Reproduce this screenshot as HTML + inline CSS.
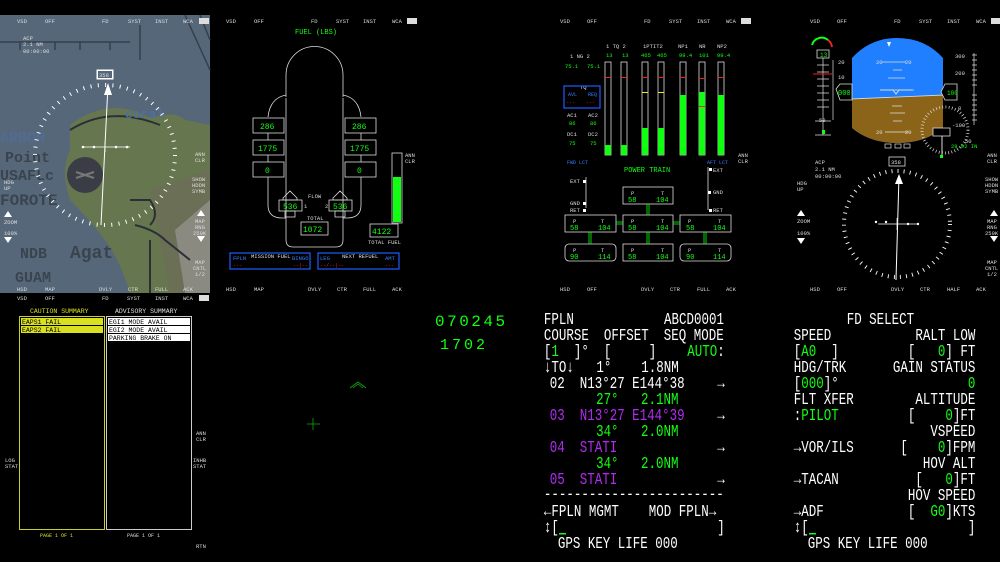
<!DOCTYPE html>
<html><head><meta charset="utf-8"><style>
html,body{margin:0;padding:0;background:#000;width:1000px;height:562px;overflow:hidden}
svg{display:block}
text{font-family:"Liberation Mono","DejaVu Sans Mono",monospace;white-space:pre}
.s{font-size:5.5px;fill:#ddd}
.g{fill:#1f1}
.w{fill:#fff}
.m{fill:#b02cf0}
.b{font-size:17px}
</style></head><body>
<svg width="1000" height="562" viewBox="0 0 1000 562" xmlns="http://www.w3.org/2000/svg" xml:space="preserve">
<rect width="1000" height="562" fill="#000"/>

<!-- ===== MAP PANEL ===== -->
<rect x="0" y="15" width="210" height="278" fill="#56677a"/>
<path d="M70 125 Q110 95 150 118 Q175 110 185 120 L210 125 L210 293 L130 293 Q120 260 105 240 Q90 220 70 200 Q60 170 70 150 Z" fill="#66774f"/>
<path d="M150 190 L210 170 L210 293 L170 293 Z" fill="#6a6f55"/>
<path d="M175 230 L210 200 L210 293 L185 293 Z" fill="#8a8a80"/>
<path d="M0 42 L130 42 M20 42 L20 50 M55 42 L55 50 M80 42 L80 50 M110 42 L110 50 M140 25 L140 60 M200 15 L210 40 M185 15 L210 70" stroke="#34404c" stroke-width="1.5" fill="none"/>
<path d="M70 130 Q110 105 160 125 M130 200 L150 200 Q160 215 150 225 M135 225 Q155 230 165 240 L190 260 M150 240 L150 293" stroke="#2b3038" stroke-width="2" fill="none"/>
<text x="0" y="142" font-family="Liberation Sans" font-weight="bold" font-size="15" fill="#4f6f9c" opacity=".7">ARBOR</text>
<text x="5" y="162" font-family="Liberation Sans" font-weight="bold" font-size="15" fill="#3a444e">Point</text>
<text x="0" y="180" font-family="Liberation Sans" font-weight="bold" font-size="15" fill="#3a444e">USAFLc</text>
<text x="0" y="205" font-family="Liberation Sans" font-weight="bold" font-size="16" fill="#3a444e">FOROTE</text>
<text x="20" y="258" font-family="Liberation Sans" font-weight="bold" font-size="15" fill="#3a444e">NDB</text>
<text x="70" y="258" font-family="Liberation Sans" font-weight="bold" font-size="18" fill="#3a444e">Agat</text>
<text x="15" y="282" font-family="Liberation Sans" font-weight="bold" font-size="15" fill="#3a444e">GUAM</text>
<text x="125" y="118" font-family="Liberation Sans" font-weight="bold" font-size="13" fill="#4f6f9c">coral</text>
<circle cx="85" cy="175" r="18" fill="#3a3d45"/>
<path d="M76 172 L94 178 M76 178 L94 172" stroke="#777" stroke-width="2"/>
<circle cx="105" cy="155" r="70" fill="none" stroke="#fff" stroke-width="4" stroke-dasharray="1 6.33"/>
<line x1="108" y1="85" x2="101" y2="225" stroke="#fff" stroke-width="1"/>
<path d="M108 83 L104 95 L112 95Z" fill="#fff"/>
<rect x="97" y="70" width="16" height="9" fill="#fff" stroke="#fff"/><rect x="98" y="71" width="14" height="7" fill="#56677a"/>
<text x="99" y="77" class="s" fill="#fff">358</text>
<path d="M83 147 L130 147 M105 142 L105 152" stroke="#fff" stroke-width="0.8"/>
<g fill="#fff"><circle cx="83" cy="147" r="1.3"/><circle cx="94" cy="147" r="1.3"/><circle cx="116" cy="147" r="1.3"/><circle cx="127" cy="147" r="1.3"/></g>
<g class="s"><text x="23" y="40">ACP</text><text x="23" y="46">2.1 NM</text><text x="23" y="53">00:00:00</text></g>
<g class="s">
<text x="4" y="184">HDG</text><text x="4" y="190">UP</text>
<text x="4" y="224">ZOOM</text><text x="4" y="235">100%</text>
<text x="195" y="156">ANN</text><text x="195" y="162">CLR</text>
<text x="192" y="181">SHOW</text><text x="192" y="187">HDDN</text><text x="192" y="193">SYMB</text>
<text x="195" y="223">MAP</text><text x="195" y="229">RNG</text><text x="193" y="235">250K</text>
<text x="195" y="264">MAP</text><text x="193" y="270">CNTL</text><text x="195" y="276">1/2</text>
</g>
<path d="M4 217 L8 211 L12 217Z M4 237 L8 243 L12 237Z M197 216 L201 210 L205 216Z M197 236 L201 242 L205 236Z" fill="#fff"/>
<g class="s" fill="#fff">
<text x="17" y="23">VSD</text><text x="45" y="23">OFF</text><text x="102" y="23">FD</text><text x="128" y="23">SYST</text><text x="155" y="23">INST</text><text x="183" y="23">WCA</text>
<text x="17" y="291">HSD</text><text x="45" y="291">MAP</text><text x="99" y="291">DVLY</text><text x="128" y="291">CTR</text><text x="155" y="291">FULL</text><text x="183" y="291">ACK</text>
</g>
<rect x="199" y="18" width="10" height="6" fill="#ddd"/>

<g class="s">
<text x="226" y="23">VSD</text><text x="254" y="23">OFF</text><text x="311" y="23">FD</text><text x="336" y="23">SYST</text><text x="363" y="23">INST</text><text x="392" y="23">WCA</text>
<text x="226" y="291">HSD</text><text x="254" y="291">MAP</text><text x="308" y="291">DVLY</text><text x="337" y="291">CTR</text><text x="363" y="291">FULL</text><text x="392" y="291">ACK</text>
<text x="560" y="23">VSD</text><text x="587" y="23">OFF</text><text x="644" y="23">FD</text><text x="669" y="23">SYST</text><text x="697" y="23">INST</text><text x="726" y="23">WCA</text>
<text x="560" y="291">HSD</text><text x="587" y="291">OFF</text><text x="641" y="291">DVLY</text><text x="670" y="291">CTR</text><text x="697" y="291">FULL</text><text x="726" y="291">ACK</text>
<text x="810" y="23">VSD</text><text x="837" y="23">OFF</text><text x="894" y="23">FD</text><text x="919" y="23">SYST</text><text x="947" y="23">INST</text><text x="976" y="23">WCA</text>
<text x="810" y="291">HSD</text><text x="837" y="291">OFF</text><text x="891" y="291">DVLY</text><text x="920" y="291">CTR</text><text x="947" y="291">HALF</text><text x="976" y="291">ACK</text>
<text x="17" y="300">VSD</text><text x="45" y="300">OFF</text><text x="102" y="300">FD</text><text x="127" y="300">SYST</text><text x="155" y="300">INST</text><text x="183" y="300">WCA</text>
</g>
<rect x="407" y="18" width="10" height="6" fill="#ddd"/><rect x="741" y="18" width="10" height="6" fill="#ddd"/><rect x="991" y="18" width="9" height="6" fill="#ddd"/><rect x="199" y="295" width="10" height="6" fill="#ddd"/>

<!-- ===== FUEL ===== -->
<text x="295" y="34" font-size="7" class="g">FUEL (LBS)</text>
<g fill="none" stroke="#ddd" stroke-width="0.8">
<path d="M286 97 L286 75 A28 28 0 0 1 343 75 L343 97"/>
<path d="M286 98 L286 240 Q286 247 293 247 L336 247 Q343 247 343 240 L343 98"/>
<path d="M286 95 Q270 98 268 117 M343 95 Q359 98 361 117"/>
<rect x="253" y="118" width="31" height="15"/><rect x="253" y="140" width="31" height="15"/><rect x="253" y="162" width="31" height="15"/>
<rect x="345" y="118" width="31" height="15"/><rect x="345" y="140" width="31" height="15"/><rect x="345" y="162" width="31" height="15"/>
<path d="M268 133 L268 140 M268 155 L268 162 M268 177 L268 205 Q268 218 282 218 L286 218 M361 133 L361 140 M361 155 L361 162 M361 177 L361 205 Q361 218 347 218 L343 218"/>
<path d="M283 198 L290 191 L297 198 L297 200 L283 200Z M333 198 L340 191 L347 198 L347 200 L333 200Z"/>
<rect x="279" y="200" width="23" height="11"/><rect x="329" y="200" width="23" height="11"/>
<rect x="285" y="211" width="10" height="6"/><rect x="335" y="211" width="10" height="6"/>
<rect x="301" y="222" width="27" height="13"/>
<rect x="392" y="153" width="10" height="70"/>
<rect x="370" y="224" width="28" height="13"/>
</g>
<rect x="393" y="177" width="8" height="45" fill="#1f1"/>
<g font-size="8" class="g">
<text x="260" y="129">286</text><text x="352" y="129">286</text>
<text x="258" y="151">1775</text><text x="350" y="151">1775</text>
<text x="265" y="173">0</text><text x="357" y="173">0</text>
<text x="283" y="209">536</text><text x="333" y="209">536</text>
<text x="303" y="232">1072</text><text x="372" y="234">4122</text>
</g>
<g class="s"><text x="308" y="198">FLOW</text><text x="304" y="208">1</text><text x="325" y="208">2</text><text x="307" y="220">TOTAL</text><text x="368" y="244">TOTAL FUEL</text><text x="405" y="157">ANN</text><text x="405" y="163">CLR</text></g>
<rect x="230" y="253" width="80" height="16" fill="none" stroke="#1a5cff" stroke-width="1.2"/>
<rect x="318" y="253" width="81" height="16" fill="none" stroke="#1a5cff" stroke-width="1.2"/>
<g class="s"><text x="251" y="258">MISSION FUEL</text><text x="342" y="258">NEXT REFUEL</text></g>
<g font-size="5.5px" fill="#3a7cff"><text x="233" y="260">FPLN</text><text x="292" y="260">BINGO</text><text x="320" y="260">LEG</text><text x="385" y="260">AMT</text></g>
<g font-size="5px" fill="#e22"><text x="233" y="267">---</text><text x="293" y="267">--|--</text><text x="320" y="267">--/--|--</text><text x="385" y="267">---</text></g>

<!-- ===== POWER TRAIN ===== -->
<g class="s"><text x="606" y="48">1 TQ 2</text><text x="643" y="48">1PTIT2</text><text x="678" y="48">NP1</text><text x="699" y="48">NR</text><text x="717" y="48">NP2</text>
<text x="570" y="58">1 NG 2</text><text x="580" y="89">TQ</text><text x="567" y="117">AC1</text><text x="588" y="117">AC2</text><text x="567" y="136">DC1</text><text x="588" y="136">DC2</text>
<text x="738" y="157">ANN</text><text x="738" y="163">CLR</text>
<text x="570" y="183">EXT</text><text x="570" y="205">GND</text><text x="570" y="212">RET</text>
<text x="713" y="172">EXT</text><text x="713" y="194">GND</text><text x="713" y="212">RET</text></g>
<g font-size="5.5px" class="g"><text x="606" y="57">13</text><text x="622" y="57">13</text><text x="641" y="57">465</text><text x="657" y="57">465</text><text x="679" y="57">99.4</text><text x="699" y="57">101</text><text x="717" y="57">99.4</text>
<text x="565" y="68">75.1</text><text x="587" y="68">75.1</text><text x="569" y="125">86</text><text x="590" y="125">86</text><text x="569" y="145">75</text><text x="590" y="145">75</text></g>
<rect x="564" y="86" width="36" height="22" fill="none" stroke="#1a5cff" stroke-width="1.2"/>
<g font-size="5px" fill="#3a7cff"><text x="568" y="96">AVL</text><text x="588" y="96">REQ</text><text x="567" y="164">FWD LCT</text><text x="707" y="164">AFT LCT</text></g>
<g font-size="5px" fill="#e22"><text x="566" y="104">---</text><text x="586" y="104">---</text></g>
<g fill="none" stroke="#ddd" stroke-width="0.8">
<rect x="605" y="62" width="6" height="93"/><rect x="621" y="62" width="6" height="93"/><rect x="642" y="62" width="6" height="93"/><rect x="658" y="62" width="6" height="93"/><rect x="680" y="62" width="6" height="93"/><rect x="699" y="62" width="6" height="93"/><rect x="718" y="62" width="6" height="93"/>
</g>
<g fill="#1f1"><rect x="605" y="145" width="6" height="10"/><rect x="621" y="145" width="6" height="10"/><rect x="642" y="128" width="6" height="27"/><rect x="658" y="128" width="6" height="27"/><rect x="680" y="95" width="6" height="60"/><rect x="699" y="92" width="6" height="63"/><rect x="718" y="95" width="6" height="60"/></g>
<g fill="#e22"><rect x="605" y="77" width="6" height="1"/><rect x="621" y="77" width="6" height="1"/><rect x="642" y="77" width="6" height="1"/><rect x="658" y="77" width="6" height="1"/><rect x="680" y="77" width="6" height="1"/><rect x="718" y="77" width="6" height="1"/><rect x="699" y="78" width="6" height="1"/><rect x="699" y="106" width="6" height="1"/></g>
<g fill="#ee2"><rect x="642" y="92" width="6" height="1"/><rect x="658" y="92" width="6" height="1"/></g>
<text x="624" y="172" font-size="7" class="g">POWER TRAIN</text>
<g fill="none" stroke="#ddd" stroke-width="0.8">
<path d="M586 177 L586 208 M708 167 L708 210"/>
<rect x="623" y="187" width="50" height="17"/>
<rect x="565" y="215" width="51" height="17"/><rect x="623" y="215" width="50" height="17"/><rect x="680" y="215" width="51" height="17"/>
<rect x="565" y="244" width="51" height="17" rx="4"/><rect x="623" y="244" width="50" height="17"/><rect x="680" y="244" width="51" height="17" rx="4"/>
</g>
<g stroke="#1f1" stroke-width="0.8"><path d="M647 204 V215 M649 204 V215 M589 232 V244 M591 232 V244 M647 232 V244 M649 232 V244 M704 232 V244 M706 232 V244 M616 222 H623 M616 224 H623 M673 222 H680 M673 224 H680"/></g>
<g fill="#fff"><rect x="583" y="180" width="3" height="3"/><rect x="583" y="202" width="3" height="3"/><rect x="583" y="209" width="3" height="3"/><rect x="709" y="168" width="3" height="3"/><rect x="708" y="191" width="3" height="3"/><rect x="709" y="209" width="3" height="3"/></g>
<g class="s"><text x="573" y="223">P</text><text x="601" y="223">T</text><text x="631" y="195">P</text><text x="661" y="195">T</text><text x="631" y="223">P</text><text x="661" y="223">T</text><text x="688" y="223">P</text><text x="718" y="223">T</text><text x="573" y="252">P</text><text x="601" y="252">T</text><text x="631" y="252">P</text><text x="661" y="252">T</text><text x="688" y="252">P</text><text x="718" y="252">T</text></g>
<g font-size="7" class="g"><text x="628" y="202">58</text><text x="656" y="202">104</text>
<text x="570" y="230">58</text><text x="598" y="230">104</text><text x="628" y="230">58</text><text x="656" y="230">104</text><text x="686" y="230">58</text><text x="713" y="230">104</text>
<text x="570" y="259">90</text><text x="598" y="259">114</text><text x="628" y="259">58</text><text x="656" y="259">104</text><text x="686" y="259">90</text><text x="713" y="259">114</text></g>

<!-- ===== PFD ===== -->
<defs><clipPath id="att"><path d="M852 58 Q870 38 897 38 Q925 38 943 58 L943 128 Q925 143 897 143 Q870 143 852 128 Z"/></clipPath></defs>
<g clip-path="url(#att)">
<rect x="850" y="35" width="95" height="110" fill="#1f7fff"/>
<path d="M850 99 L945 95 L945 145 L850 145Z" fill="#8b6419"/>
<path d="M850 99 L945 95" stroke="#ddd" stroke-width="0.8"/>
<g stroke="#ddd" stroke-width="0.8"><path d="M882 62 H906 M893 70 H902 M888 78 H905 M881 90 H914 M892 106 H902 M890 113 H905 M893 121 H902 M885 132 H909"/></g>
<g class="s" fill="#ddd"><text x="876" y="64">20</text><text x="905" y="64">20</text><text x="876" y="134">20</text><text x="905" y="134">20</text></g>
</g>
<path d="M887 42 L891 42 L889 47Z" fill="#fff"/>
<path d="M880 90 L893 90 L896 94 L899 90 L912 90" stroke="#ddd" fill="none"/>
<path d="M812 45 A10 10 0 0 1 828 40" stroke="#1f1" stroke-width="2" fill="none"/><path d="M828 40 A10 10 0 0 1 832 47" stroke="#e22" stroke-width="2" fill="none"/>
<rect x="817" y="50" width="12" height="8" fill="none" stroke="#ddd" stroke-width="0.8"/><text x="820" y="57" font-size="6" class="g">13</text>
<g stroke="#ddd" stroke-width="0.7"><path d="M823 58 V135 M817 65 H829 M817 72 H829 M817 79 H829 M817 86 H829 M817 93 H829 M817 100 H829 M817 107 H829 M815 121 H831 M815 135 H831"/><path d="M833 60 V120"/></g>
<path d="M813 74 H832" stroke="#e22" stroke-width="1"/>
<rect x="822" y="130" width="3" height="4" fill="#1f1"/>
<path d="M836 89 L840 84 H852 V100 H840Z" fill="#000" stroke="#ddd" stroke-width="0.8"/><text x="838" y="95" font-size="7" class="g">000</text>
<path d="M945 84 H957 V100 H945 L941 92Z" fill="#000" stroke="#ddd" stroke-width="0.8"/><text x="947" y="95" font-size="6" class="g">100</text>
<g class="s"><text x="838" y="64">20</text><text x="838" y="79">10</text><text x="819" y="122">50</text><text x="955" y="58">300</text><text x="955" y="75">200</text><text x="958" y="110">0</text><text x="952" y="127">-100</text><text x="965" y="143">50</text></g>
<g stroke="#ddd" stroke-width="0.7"><path d="M974 53 V125 M972 55 H977 M972 60 H977 M972 65 H977 M972 70 H977 M972 75 H977 M972 80 H977 M972 85 H977 M972 95 H977 M972 100 H977 M972 105 H977 M972 110 H977 M972 115 H977 M972 120 H977"/></g>
<circle cx="945" cy="130" r="23" fill="none" stroke="#ddd" stroke-width="3" stroke-dasharray="0.7 2.5"/>
<rect x="933" y="128" width="17" height="8" fill="#000" stroke="#ddd" stroke-width="0.8"/>
<path d="M942 136 V157" stroke="#ddd"/><rect x="940" y="155" width="3" height="3" fill="#1f1"/>
<text x="951" y="148" font-size="5.5" class="g">29.92 IN</text>
<g fill="none" stroke="#ddd" stroke-width="0.7"><rect x="885" y="144" width="6" height="4"/><rect x="895" y="144" width="6" height="4"/><rect x="904" y="144" width="6" height="4"/></g>
<rect x="889" y="157" width="16" height="9" fill="none" stroke="#ddd" stroke-width="0.8"/><text x="891" y="164" class="s">358</text>
<circle cx="897" cy="224" r="53" fill="none" stroke="#fff" stroke-width="4" stroke-dasharray="0.9 5.2"/>
<path d="M899 176 L896 280" stroke="#fff"/><path d="M899 174 L895 184 L903 184Z" fill="#fff"/>
<path d="M878 224 H918 M897 218 V230" stroke="#fff" stroke-width="0.7"/>
<g fill="#fff"><circle cx="876" cy="222" r="1.2"/><circle cx="886" cy="222" r="1.2"/><circle cx="908" cy="224" r="1.2"/><circle cx="918" cy="224" r="1.2"/></g>
<g class="s"><text x="815" y="164">ACP</text><text x="815" y="171">2.1 NM</text><text x="815" y="178">00:00:00</text>
<text x="797" y="185">HDG</text><text x="797" y="191">UP</text><text x="797" y="223">ZOOM</text><text x="797" y="235">100%</text>
<text x="987" y="157">ANN</text><text x="987" y="163">CLR</text><text x="985" y="181">SHOW</text><text x="985" y="187">HDDN</text><text x="985" y="193">SYMB</text>
<text x="987" y="223">MAP</text><text x="987" y="229">RNG</text><text x="985" y="235">250K</text><text x="987" y="264">MAP</text><text x="985" y="270">CNTL</text><text x="987" y="276">1/2</text></g>
<path d="M797 216 L801 210 L805 216Z M797 238 L801 244 L805 238Z M990 216 L994 210 L998 216Z M990 236 L994 242 L998 236Z" fill="#fff"/>

<!-- ===== CAUTION / ADVISORY ===== -->
<text x="30" y="313" font-size="6.5" fill="#d8e020">CAUTION SUMMARY</text>
<text x="115" y="313" font-size="6.5" fill="#ddd">ADVISORY SUMMARY</text>
<rect x="19.5" y="316.5" width="85" height="213" fill="none" stroke="#c8d020"/>
<rect x="106.5" y="316.5" width="85" height="213" fill="none" stroke="#ccc"/>
<rect x="21" y="318" width="82" height="7" fill="#d8e020"/><rect x="21" y="326" width="82" height="7" fill="#d8e020"/>
<rect x="108" y="318" width="82" height="7" fill="#fff"/><rect x="108" y="326" width="82" height="7" fill="#fff"/><rect x="108" y="334" width="82" height="7" fill="#fff"/>
<g font-size="6.5" fill="#000"><text x="22" y="324">EAPS1 FAIL</text><text x="22" y="332">EAPS2 FAIL</text><text x="109" y="324">EGI1 MODE AVAIL</text><text x="109" y="332">EGI2 MODE AVAIL</text><text x="109" y="340">PARKING BRAKE ON</text></g>
<text x="40" y="537" font-size="5" fill="#d8e020">PAGE 1 OF 1</text><text x="127" y="537" font-size="5" fill="#ddd">PAGE 1 OF 1</text>
<g class="s"><text x="5" y="462">LOG</text><text x="5" y="468">STAT</text><text x="196" y="435">ANN</text><text x="196" y="441">CLR</text><text x="193" y="462">INHB</text><text x="193" y="468">STAT</text><text x="196" y="548">RTN</text></g>

<!-- ===== HUD ===== -->
<text x="435" y="326" font-size="16" class="g" letter-spacing="2.5">070245</text>
<text x="440" y="349" font-size="15" class="g" letter-spacing="3">1702</text>
<path d="M350 388 L358 382 L366 388 M353 388 L358 384 L363 388" stroke="#1a1" fill="none" stroke-width="0.8"/>
<path d="M313 418 V430 M307 424 H320" stroke="#1a1" stroke-width="0.8"/>

<!-- ===== FPLN / FD SELECT (horizontally condensed) ===== -->
<g transform="scale(0.735,1)" class="b w">
<text x="740" y="324">FPLN</text><text x="985" y="324" text-anchor="end">ABCD0001</text>
<text x="740" y="340">COURSE  OFFSET  SEQ MODE</text>
<text x="740" y="356">[<tspan class="g">1</tspan>  ]°  [     ]</text><text x="986" y="356" text-anchor="end"><tspan class="g">AUTO</tspan>:</text>
<text x="740" y="372">↓TO↓   1°    1.8NM</text>
<text x="748" y="388">02  N13°27 E144°38</text><text x="986" y="388" text-anchor="end">→</text>
<text x="811" y="404" class="g">27°   2.1NM</text>
<text x="748" y="420" class="m">03  N13°27 E144°39</text><text x="986" y="420" text-anchor="end">→</text>
<text x="811" y="436" class="g">34°   2.0NM</text>
<text x="748" y="452" class="m">04  STATI</text><text x="986" y="452" text-anchor="end">→</text>
<text x="811" y="468" class="g">34°   2.0NM</text>
<text x="748" y="484" class="m">05  STATI</text><text x="986" y="484" text-anchor="end">→</text>
<text x="740" y="499">------------------------</text>
<text x="740" y="516">←FPLN MGMT    MOD FPLN→</text>
<text x="740" y="532">↕[</text><text x="986" y="532" text-anchor="end">]</text>
<text x="759" y="548">GPS KEY LIFE 000</text>

<text x="1152" y="324">FD SELECT</text>
<text x="1080" y="340">SPEED</text><text x="1327" y="340" text-anchor="end">RALT LOW</text>
<text x="1080" y="356">[<tspan class="g">A0</tspan>  ]</text><text x="1327" y="356" text-anchor="end">[   <tspan class="g">0</tspan>] FT</text>
<text x="1080" y="372">HDG/TRK</text><text x="1327" y="372" text-anchor="end">GAIN STATUS</text>
<text x="1080" y="388">[<tspan class="g">000</tspan>]°</text><text x="1327" y="388" text-anchor="end" class="g">0</text>
<text x="1080" y="404">FLT XFER</text><text x="1327" y="404" text-anchor="end">ALTITUDE</text>
<text x="1080" y="420">:<tspan class="g">PILOT</tspan></text><text x="1327" y="420" text-anchor="end">[    <tspan class="g">0</tspan>]FT</text>
<text x="1327" y="436" text-anchor="end">VSPEED</text>
<text x="1080" y="452">→VOR/ILS</text><text x="1327" y="452" text-anchor="end">[    <tspan class="g">0</tspan>]FPM</text>
<text x="1327" y="468" text-anchor="end">HOV ALT</text>
<text x="1080" y="484">→TACAN</text><text x="1327" y="484" text-anchor="end">[   <tspan class="g">0</tspan>]FT</text>
<text x="1327" y="500" text-anchor="end">HOV SPEED</text>
<text x="1080" y="516">→ADF</text><text x="1327" y="516" text-anchor="end">[  <tspan class="g">G0</tspan>]KTS</text>
<text x="1080" y="532">↕[</text><text x="1327" y="532" text-anchor="end">]</text>
<text x="1099" y="548">GPS KEY LIFE 000</text>
</g>
<rect x="559" y="533" width="7" height="1.5" fill="#1f1"/>
<rect x="809" y="533" width="7" height="1.5" fill="#1f1"/>
</svg>
</body></html>
